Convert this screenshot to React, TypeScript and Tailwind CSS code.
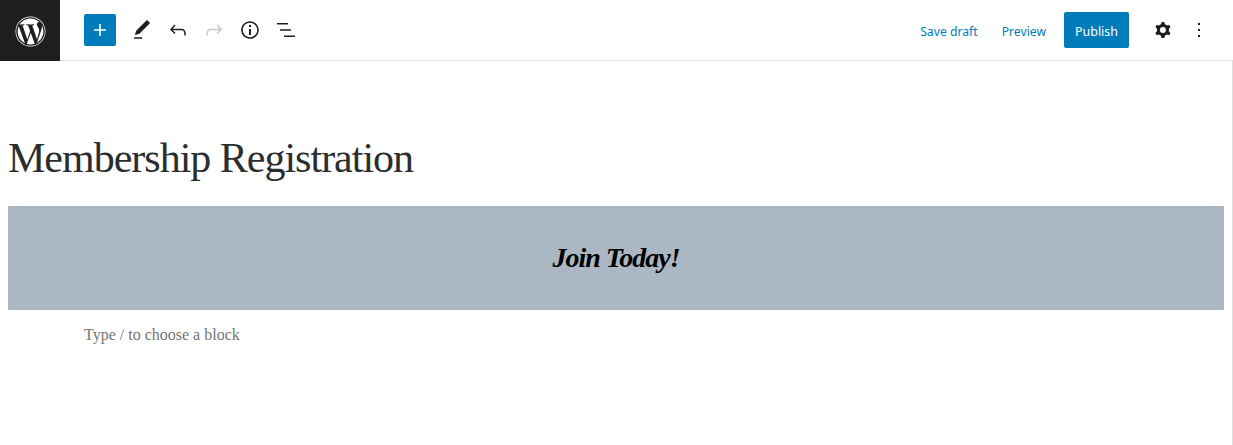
import { FaWordpress } from "react-icons/fa";

const ICONS = {
  plus: "M18 11.2h-5.2V6h-1.6v5.2H6v1.6h5.2V18h1.6v-5.2H18z",
  pencil: "M20.1 5.1L16.9 2 6.2 12.7l-1.3 4.4 4.5-1.3L20.1 5.1zM4 20.8h8v-1.5H4v1.5z",
  undo: "M18.3 11.7c-.6-.6-1.4-.9-2.3-.9H6.7l2.9-3.3-1.1-1-4.5 5L8.5 16l1-1-2.7-2.7H16c.5 0 .9.2 1.3.5 1 1 1 3.4 1 4.5v.3h1.5v-.2c0-1.5 0-4.3-1.5-5.7z",
  redo: "M15.6 6.5l-1.1 1 2.9 3.3H8c-.9 0-1.7.3-2.3.9-1.4 1.5-1.4 4.2-1.4 5.6v.2h1.5v-.3c0-1.1 0-3.5 1-4.5.3-.3.7-.5 1.3-.5h9.2L14.5 15l1.1 1.1 4.6-4.6-4.6-5z",
  info: "M12 3.2c-4.8 0-8.8 3.9-8.8 8.8 0 4.8 3.9 8.8 8.8 8.8 4.8 0 8.8-3.9 8.8-8.8 0-4.8-4-8.8-8.8-8.8zm0 16c-4 0-7.2-3.3-7.2-7.2C4.8 8 8 4.8 12 4.8s7.2 3.3 7.2 7.2c0 4-3.2 7.2-7.2 7.2zM11 17h2v-6h-2v6zm0-8h2V7h-2v2z",
  list: "M3 5h11v1.500H3V5zm3 6.200h11v1.500H6v-1.500zM10 17.500h11V19H10v-1.500z",
  cog: "M10.289 4.836A1 1 0 0111.275 4h1.306a1 1 0 01.987.836l.244 1.466c.787.26 1.503.679 2.108 1.218l1.393-.522a1 1 0 011.216.437l.653 1.13a1 1 0 01-.23 1.273l-1.148.944a6.025 6.025 0 010 2.435l1.149.946a1 1 0 01.23 1.272l-.653 1.13a1 1 0 01-1.216.437l-1.394-.522c-.605.54-1.32.958-2.108 1.218l-.244 1.466a1 1 0 01-.987.836h-1.306a1 1 0 01-.986-.836l-.244-1.466a5.995 5.995 0 01-2.108-1.218l-1.394.522a1 1 0 01-1.217-.436l-.653-1.131a1 1 0 01.23-1.272l1.149-.946a6.026 6.026 0 010-2.435l-1.148-.944a1 1 0 01-.23-1.272l.653-1.131a1 1 0 011.217-.437l1.393.522a5.994 5.994 0 012.108-1.218l.244-1.466zM14.929 12a3 3 0 11-6 0 3 3 0 016 0z",
  more: "M13 19h-2v-2h2v2zm0-6h-2v-2h2v2zm0-6h-2V5h2v2z",
};

function Icon({ d, className = "" }: { d: string; className?: string }) {
  return (
    <svg viewBox="0 0 24 24" width={24} height={24} fill="currentColor" fillRule="evenodd" className={className}>
      <path d={d} />
    </svg>
  );
}

function TopBar() {
  return (
    <header className="flex h-[61px] items-start border-b border-[#e0e0e0] font-['Noto_Sans',sans-serif]">
      <div className="flex h-[61px] w-[60px] items-center justify-center bg-[#1e1e1e] pt-px text-white">
        <FaWordpress size={31} />
      </div>

      <div className="ml-6 mt-[14px] flex items-center text-[#1e1e1e]">
        <button className="flex h-8 w-8 items-center justify-center rounded-[2px] bg-[#007cba] text-white">
          <Icon d={ICONS.plus} />
        </button>
        <Icon d={ICONS.pencil} className="ml-[14px]" />
        <Icon d={ICONS.undo} className="ml-3" />
        <Icon d={ICONS.redo} className="ml-3 text-[#c8c8c8]" />
        <Icon d={ICONS.info} className="ml-3" />
        <Icon d={ICONS.list} className="ml-3" />
      </div>

      <div className="ml-auto mr-[22px] mt-3 flex items-center text-[12.2px] text-[#007cba]">
        <span className="pt-1">Save draft</span>
        <span className="ml-6 pt-1">Preview</span>
        <button className="ml-[18px] h-9 w-[65px] rounded-[2px] bg-[#007cba] pt-1 text-[12.4px] text-white">Publish</button>
        <Icon d={ICONS.cog} className="ml-[22px] text-[#1e1e1e]" />
        <Icon d={ICONS.more} className="ml-3 text-[#1e1e1e]" />
      </div>
    </header>
  );
}

export default function App() {
  return (
    <div className="h-[445px] w-[1233px] overflow-hidden bg-white">
      <TopBar />
      <main className="h-[384px] border-r border-[#e0e0e0] pl-2 pr-2 font-['Liberation_Serif',serif]">
        <h1 className="pt-[72px] text-[42px] leading-[50px] tracking-[-1px] text-[#2b2d2f]">Membership Registration</h1>
        <div className="mt-[23px] flex h-[104px] items-center justify-center bg-[#abb8c3] text-[28px] font-bold italic tracking-[-1px] text-black">
          Join Today!
        </div>
        <p className="ml-[76px] mt-4 text-[16px] leading-[18px] text-[#757575]">Type / to choose a block</p>
      </main>
    </div>
  );
}
